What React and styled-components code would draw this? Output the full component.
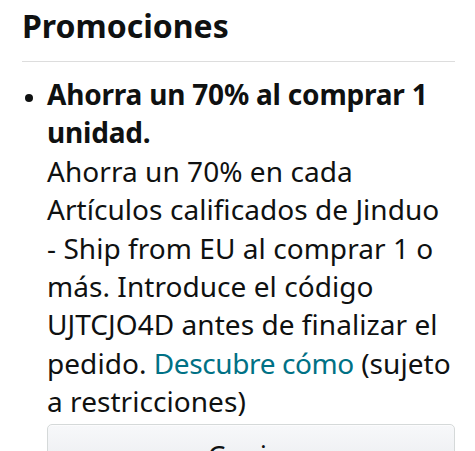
import React from "react";
import styled, { createGlobalStyle } from "styled-components";

const GlobalStyle = createGlobalStyle`
    body {
        margin: 0;
        background: #ffffff;
        font-family: "Noto Sans", "Open Sans", sans-serif;
        color: #0f1111;
    }
`;

const Page = styled.div`
    padding: 6px 20px 0 22px;
`;

const Title = styled.h2`
    margin: 0;
    font-size: 32px;
    line-height: 40px;
    font-weight: 700;
`;

const Divider = styled.hr`
    margin: 15px 0 13px;
    border: none;
    border-top: 1px solid #dddddd;
`;

const Promo = styled.div`
    display: flex;
`;

const Bullet = styled.span`
    flex: 0 0 25px;
    display: flex;
    align-items: flex-start;
    padding-top: 19px;

    &::before {
        content: "";
        width: 8px;
        height: 8px;
        margin-left: 3px;
        border-radius: 50%;
        background: #0f1111;
    }
`;

const Body = styled.div`
    flex: 1;
    font-size: 28px;
    line-height: 38.4px;
    letter-spacing: 0.05px;
`;

const Headline = styled.div`
    font-weight: 700;
    letter-spacing: -0.2px;
`;

const Link = styled.a`
    color: #007185;
    text-decoration: none;
    letter-spacing: -0.4px;
`;

const CopyButton = styled.button`
    display: block;
    width: 100%;
    margin-top: 3px;
    height: 62px;
    border: 1px solid #d5d9d9;
    border-radius: 5px;
    background: linear-gradient(#f7f8fa, #e7e9ec);
    font-family: inherit;
    font-size: 28px;
    color: #0f1111;
    box-shadow: 0 1px 0 rgba(255, 255, 255, 0.6) inset;
`;

const App = () => {
    return (
        <Page>
            <GlobalStyle />
            <Title>Promociones</Title>
            <Divider />
            <Promo>
                <Bullet />
                <Body>
                    <Headline>Ahorra un 70% al comprar 1 unidad.</Headline>
                    Ahorra un 70% en cada Artículos calificados de Jinduo - Ship
                    from EU al comprar 1 o más. Introduce el código UJTCJO4D antes
                    de finalizar el pedido. <Link href="#">Descubre cómo</Link>{" "}
                    (sujeto a restricciones)
                    <CopyButton>Copiar</CopyButton>
                </Body>
            </Promo>
        </Page>
    );
};

export default App;
